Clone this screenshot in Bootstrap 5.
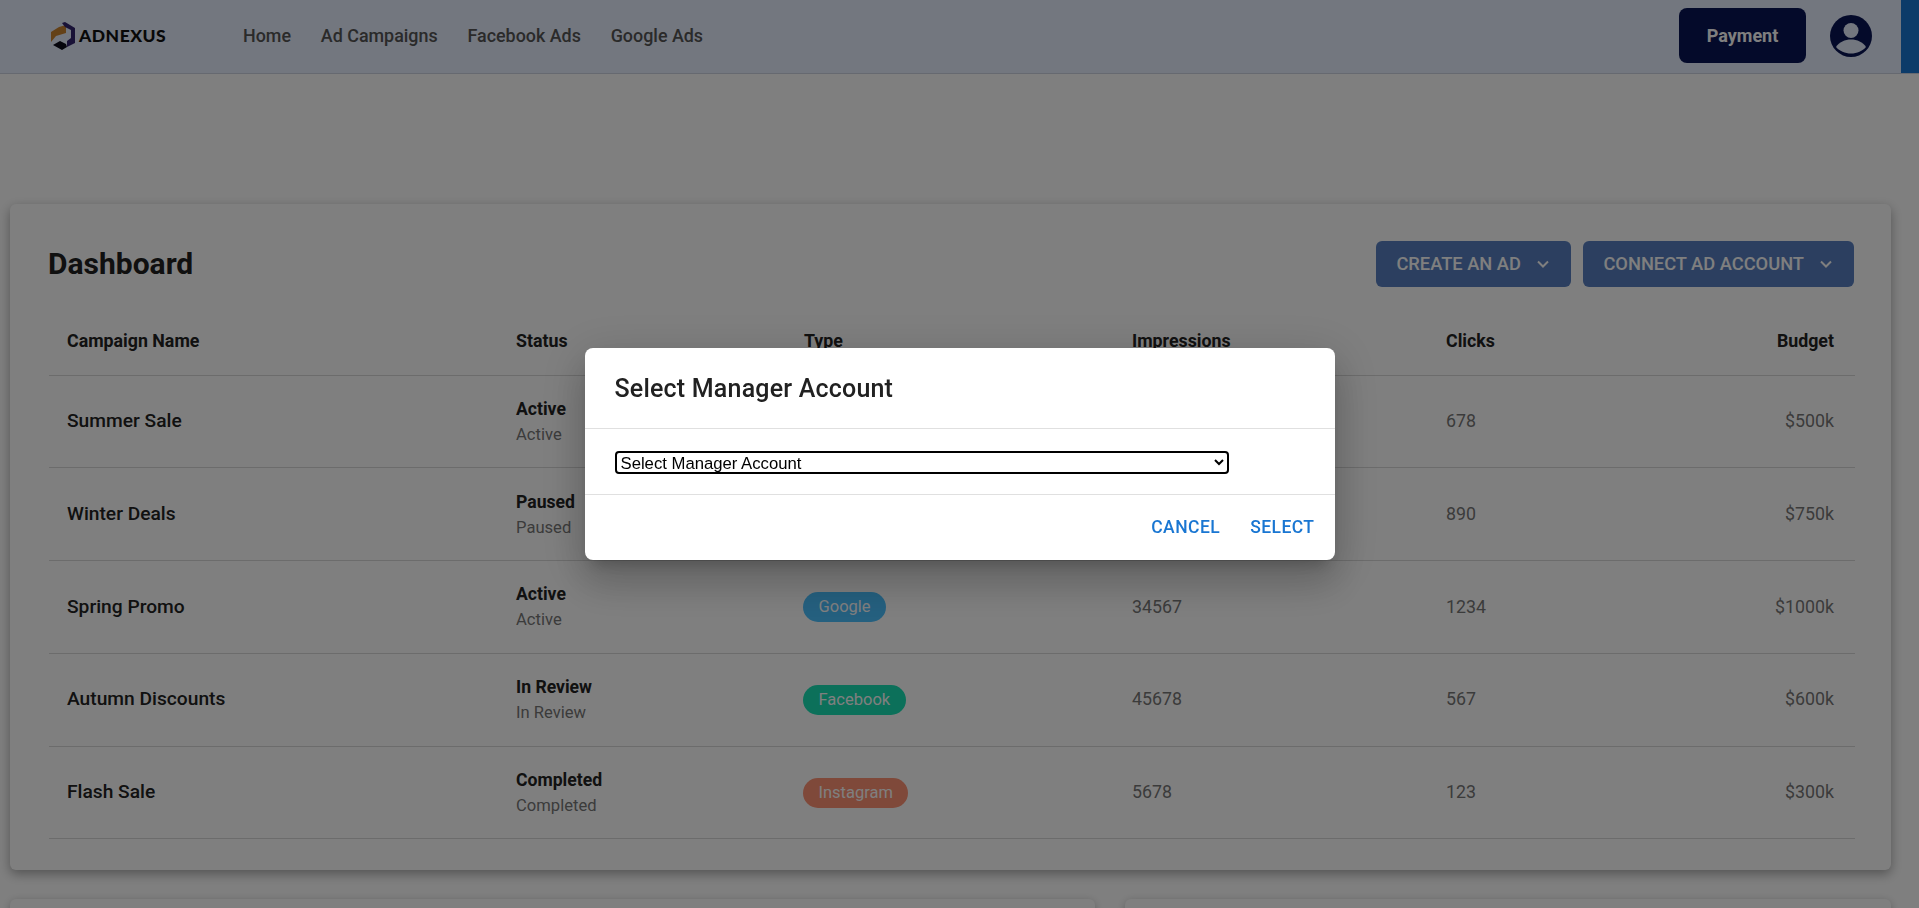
<!DOCTYPE html>
<html lang="en">
<head>
<meta charset="utf-8">
<title>Adnexus Dashboard</title>
<link href="https://cdn.jsdelivr.net/npm/bootstrap@5.3.0/dist/css/bootstrap.min.css" rel="stylesheet">
<style>
html,body{height:100%;overflow:hidden;background:#fff;font-family:Roboto,sans-serif;color:rgba(0,0,0,.87)}
.topbar{height:74px;background:#e6eefe;border-bottom:1px solid #ccd3e0;padding:0 0 2px 51px}
.brand-wrap{width:192px;gap:4px}
.brand-word{font-family:Lato,sans-serif;font-weight:900;font-size:17.500px;letter-spacing:.5px;color:#111;line-height:1}
.top-link{font-size:17.900px;font-weight:500;color:#555;text-decoration:none;line-height:1}
.top-links{gap:29.800px}
.pay-btn{width:127px;height:55px;border-radius:8px;background:#081454;color:#fff;font-size:18px;font-weight:700;border:0}
.user-ico{width:44px;height:44px;margin:0 28px 0 23px}
.edge-strip{width:18px;height:73px;margin-bottom:-2px;background:#1976d2}
.page-main{padding:130px 28px 0 10px}
.dash-card{height:666px;border:0;border-radius:6px;box-shadow:0 4px 12px rgba(0,0,0,.35);padding:37px 37px 0 39px}
.dash-title{font-size:30px;font-weight:700;margin:0 0 0 -1px;color:#212121}
.blue-btn{height:46px;background:#587fc0;color:#fff;font-size:18.300px;font-weight:500;border:0;border-radius:6px;padding:0 21px 0 20px;gap:15px}
.blue-btn:hover{background:#587fc0;color:#fff}
.btn-pair{gap:12.500px}
.dash-table{table-layout:fixed;width:1806px;margin:21px 0 0;color:rgba(0,0,0,.87)}
.dash-table th,.dash-table td{padding:0 18px;vertical-align:middle;border-bottom:1px solid #d9d9d9;background:transparent;color:inherit}
.dash-table th:last-child,.dash-table td:last-child{padding-right:21px}
.dash-table thead th{height:67px;font-size:17.800px;font-weight:700;color:#222}
.dash-table tbody tr{height:92.800px}
.c1{width:449px}.c2{width:288px}.c3{width:328px}.c4{width:314px}.c5{width:220px}.c6{width:207px}
.dash-table td.row-name{font-size:19.200px;font-weight:500;color:#222}
.stat-a{font-size:17.600px;font-weight:700;line-height:25px;color:#222;margin-top:1px}
.stat-b{font-size:16.600px;line-height:25px;color:#777}
.pill{display:inline-block;height:30px;line-height:30px;border-radius:15px;padding:0 15.500px;font-size:16.500px;color:#fff;font-weight:400;margin-left:-1px}
.pill-g{background:#4ac0ff}.pill-f{background:#18e0b4}.pill-i{background:#ff9274}
.dash-table td.cell-num{font-size:17.800px;color:#777}
.low-row{margin-top:29px;gap:30px}
.low-card{height:200px;border:0;border-radius:6px;box-shadow:0 2px 8px rgba(0,0,0,.25)}
.low-a{width:1085px}.low-b{width:766px}
.modal-backdrop.show{opacity:.5}
.acct-dialog{max-width:750px}
.acct-content{border:0;border-radius:8px;box-shadow:0 11px 15px -7px rgba(0,0,0,.2),0 24px 38px 3px rgba(0,0,0,.14),0 9px 46px 8px rgba(0,0,0,.12)}
.acct-head{height:81px;padding:2px 30px 0;border-bottom:1px solid #e0e0e0}
.acct-title{font-size:25px;font-weight:500;letter-spacing:.2px;color:#212121;margin:0}
.acct-body{height:66px;padding:1px 30px 0;border-bottom:1px solid #e0e0e0}
.acct-select{width:614px;height:23px;font-family:"Liberation Sans",Arial,sans-serif;font-size:16.700px;color:#000;background:#fff;border:2px solid #000;border-radius:4px;padding:0}
.acct-foot{height:65px;padding:0 20px 0 0;gap:30px}
.text-act{background:none;border:0;padding:0;color:#1976d2;font-size:17.500px;font-weight:500;letter-spacing:.45px}
</style>
</head>
<body>
<nav class="topbar d-flex align-items-center">
  <div class="brand-wrap d-flex align-items-center">
    <svg width="24" height="28" viewBox="0 0 24 28" aria-hidden="true"><path d="M0 10 8 5l7-2v8L5 14l-5 6z" fill="#c9822f"/><path d="M11 1 14 0l10 6v15l-8 4v-6l4-3V8l-6-3z" fill="#33246e"/><path d="M2 23l7-4 6 3 1 3 5-3-10 6z" fill="#0a0a18"/></svg>
    <span class="brand-word">ADNEXUS</span>
  </div>
  <div class="top-links d-flex align-items-center">
    <a class="top-link" href="#">Home</a>
    <a class="top-link" href="#">Ad Campaigns</a>
    <a class="top-link" href="#">Facebook Ads</a>
    <a class="top-link" href="#">Google Ads</a>
  </div>
  <div class="ms-auto d-flex align-items-center">
    <button class="pay-btn btn" type="button">Payment</button>
    <svg class="user-ico" viewBox="0 0 44 44" aria-hidden="true"><circle cx="22" cy="22" r="21" fill="#081454"/><circle cx="22" cy="16.5" r="7.5" fill="#e6eefe"/><path d="M7 33c3-5 9-7.500 15-7.500S34 28 37 33c-3.500 4-9 6.500-15 6.500S10.500 37 7 33z" fill="#e6eefe"/></svg>
    <div class="edge-strip"></div>
  </div>
</nav>
<main class="page-main">
  <section class="card dash-card">
    <div class="d-flex align-items-center justify-content-between">
      <h1 class="dash-title">Dashboard</h1>
      <div class="d-flex btn-pair">
        <button class="btn blue-btn d-flex align-items-center" type="button">CREATE AN AD <svg width="14" height="14" viewBox="0 0 14 14" aria-hidden="true"><path d="M2 4.500 7 9.500l5-5" fill="none" stroke="currentColor" stroke-width="2"/></svg></button>
        <button class="btn blue-btn d-flex align-items-center" type="button">CONNECT AD ACCOUNT <svg width="14" height="14" viewBox="0 0 14 14" aria-hidden="true"><path d="M2 4.500 7 9.500l5-5" fill="none" stroke="currentColor" stroke-width="2"/></svg></button>
      </div>
    </div>
    <table class="table dash-table">
      <thead><tr><th class="c1">Campaign Name</th><th class="c2">Status</th><th class="c3">Type</th><th class="c4">Impressions</th><th class="c5">Clicks</th><th class="c6 text-end">Budget</th></tr></thead>
      <tbody>
        <tr><td class="row-name">Summer Sale</td><td><div class="stat-a">Active</div><div class="stat-b">Active</div></td><td><span class="pill pill-f">Facebook</span></td><td class="cell-num">12345</td><td class="cell-num">678</td><td class="cell-num text-end">$500k</td></tr>
        <tr><td class="row-name">Winter Deals</td><td><div class="stat-a">Paused</div><div class="stat-b">Paused</div></td><td><span class="pill pill-i">Instagram</span></td><td class="cell-num">23456</td><td class="cell-num">890</td><td class="cell-num text-end">$750k</td></tr>
        <tr><td class="row-name">Spring Promo</td><td><div class="stat-a">Active</div><div class="stat-b">Active</div></td><td><span class="pill pill-g">Google</span></td><td class="cell-num">34567</td><td class="cell-num">1234</td><td class="cell-num text-end">$1000k</td></tr>
        <tr><td class="row-name">Autumn Discounts</td><td><div class="stat-a">In Review</div><div class="stat-b">In Review</div></td><td><span class="pill pill-f">Facebook</span></td><td class="cell-num">45678</td><td class="cell-num">567</td><td class="cell-num text-end">$600k</td></tr>
        <tr><td class="row-name">Flash Sale</td><td><div class="stat-a">Completed</div><div class="stat-b">Completed</div></td><td><span class="pill pill-i">Instagram</span></td><td class="cell-num">5678</td><td class="cell-num">123</td><td class="cell-num text-end">$300k</td></tr>
      </tbody>
    </table>
  </section>
  <div class="low-row d-flex">
    <div class="card low-card low-a"></div>
    <div class="card low-card low-b"></div>
  </div>
</main>
<div class="modal-backdrop show"></div>
<div class="modal d-block" tabindex="-1" role="dialog" aria-modal="true">
  <div class="modal-dialog modal-dialog-centered acct-dialog">
    <div class="modal-content acct-content">
      <div class="acct-head d-flex align-items-center"><h2 class="acct-title">Select Manager Account</h2></div>
      <div class="acct-body d-flex align-items-center">
        <select class="acct-select"><option>Select Manager Account</option></select>
      </div>
      <div class="acct-foot d-flex align-items-center justify-content-end">
        <button class="text-act" type="button">CANCEL</button>
        <button class="text-act" type="button">SELECT</button>
      </div>
    </div>
  </div>
</div>
<script src="https://cdn.jsdelivr.net/npm/bootstrap@5.3.0/dist/js/bootstrap.bundle.min.js"></script>
</body>
</html>
